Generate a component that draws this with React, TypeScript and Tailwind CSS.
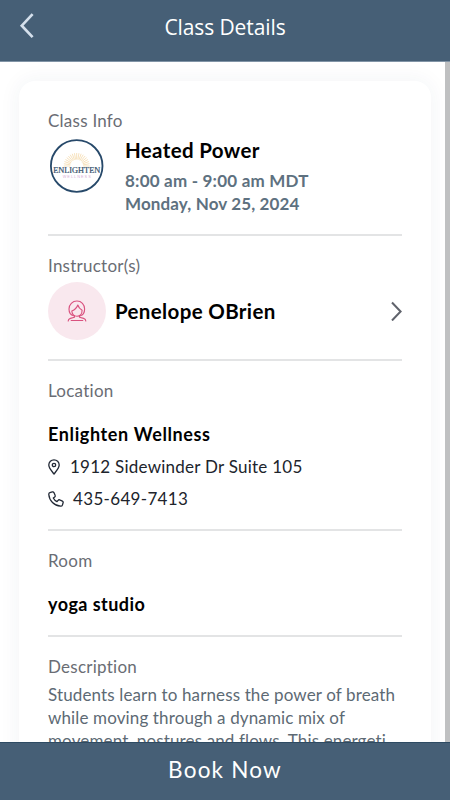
import type { ReactNode } from "react";

type SectionProps = {
  title: string;
  className: string;
  children: ReactNode;
};

const Section = ({ title, className, children }: SectionProps) => (
  <section className={`border-[#e3e4e5] ${className}`}>
    <h2 className="text-[17px] leading-5 tracking-[0.25px] text-[#6a6d74]">
      <span>{title}</span>
    </h2>
    {children}
  </section>
);

const rays = Array.from({ length: 19 }, (_, i) => (Math.PI * i) / 18);

const StudioLogo = () => (
  <svg width="57" height="56" viewBox="0 0 57 56" className="shrink-0">
    <circle cx="28.7" cy="28" r="25.8" fill="#fff" stroke="#27496a" strokeWidth="1.8" />
    {rays.map((angle, i) => (
      <line
        key={i}
        x1={28.7 - 6.5 * Math.cos(angle)}
        y1={28 - 6.5 * Math.sin(angle)}
        x2={28.7 - 13 * Math.cos(angle)}
        y2={28 - 13 * Math.sin(angle)}
        stroke="#f6dfb6"
        strokeWidth="0.9"
      />
    ))}
    <text
      x="28.7"
      y="34.5"
      textAnchor="middle"
      textLength="47"
      lengthAdjust="spacingAndGlyphs"
      fontSize="7.8"
      fill="#35506b"
      stroke="#35506b"
      strokeWidth="0.2"
      fontFamily="'Liberation Serif', serif"
    >
      ENLIGHTEN
    </text>
    <text
      x="28.7"
      y="39.8"
      textAnchor="middle"
      textLength="28"
      fontSize="3.8"
      fill="#d6aed6"
      fontFamily="'Liberation Sans', sans-serif"
    >
      WELLNESS
    </text>
  </svg>
);

const InstructorIcon = () => (
  <svg
    width="20"
    height="22"
    viewBox="0 0 20 22"
    fill="none"
    stroke="#d9527f"
    strokeWidth="1.15"
    strokeLinecap="round"
    strokeLinejoin="round"
  >
    <path d="M6.8 15.8C3.9 15.2 2 12.400 2 9A7.900 7.900 0 0 1 10 1c4.400 0 7.600 3.500 7.600 8 0 3.400-1.600 6.200-4.400 6.800" />
    <path d="M4.800 11C7.800 9.800 9.900 7.700 10.800 5c.7 2.300 2.100 4 4.300 5.200 0 3.500-2.200 6-5.100 6-2.800 0-4.900-2.200-5.200-5.200Z" />
    <path d="M7.500 16v1.300L3.400 18.400C1.900 18.800 1.200 19.700 1.200 21M12.500 16v1.300l4.100 1.100c1.500.4 2.200 1.300 2.200 2.600M4.200 20.500h11.600" />
  </svg>
);

const PinIcon = () => (
  <svg
    width="12"
    height="16"
    viewBox="0 0 12 16"
    fill="none"
    stroke="#222936"
    strokeWidth="1.3"
    strokeLinejoin="round"
  >
    <path d="M6 15C4.200 12.600.8 9.200.8 6a5.200 5.200 0 0 1 10.400 0c0 3.200-3.400 6.600-5.200 9Z" />
    <circle cx="6" cy="6" r="1.700" />
  </svg>
);

const PhoneIcon = () => (
  <svg
    width="16"
    height="16"
    viewBox="0 0 16 16"
    fill="none"
    stroke="#222936"
    strokeWidth="1.3"
    strokeLinejoin="round"
  >
    <path d="M4.300.9 1.900 1.600C1 1.900.7 2.600.8 3.500 1.300 9.800 6.200 14.700 12.500 15.200c.9.1 1.600-.2 1.900-1.100l.7-2.400c.2-.7-.1-1.300-.7-1.600l-2.700-1.200c-.6-.3-1.200-.1-1.600.4L9 10.700C7.400 9.900 6.100 8.600 5.300 7l1.400-1.100c.5-.4.7-1 .4-1.600L5.900 1.600C5.600 1 5 .7 4.300.9Z" />
  </svg>
);

const App = () => {
  return (
    <div className="flex h-[800px] w-[450px] flex-col overflow-hidden bg-white font-['Lato','Open_Sans',sans-serif]">
      {/* Header */}
      <header className="grid h-[62px] shrink-0 grid-cols-[1fr_auto_1fr] items-start border-b border-[#8194a6] bg-[#465f76] text-white">
        <button aria-label="Back" className="ml-[19px] mt-[13px] w-4">
          <svg width="16" height="26" viewBox="0 0 16 26" fill="none" stroke="#d5e0ec" strokeWidth="2.7">
            <path d="M13.600 1.200 2.800 12.700l10.800 11.500" />
          </svg>
        </button>
        <h1 className="mt-3 font-['Open_Sans','Noto_Sans',sans-serif] text-[21px] leading-[30px] tracking-[-0.1px]">
          <span>Class Details</span>
        </h1>
      </header>

      {/* Scrolling content */}
      <main className="flex min-h-0 flex-1 overflow-hidden">
        <div className="min-w-0 flex-1 pl-[19px] pr-[14px] pt-[19px]">
          <div className="h-[760px] rounded-2xl bg-white px-[29px] shadow-[0_0_20px_2px_rgba(40,50,90,0.05)]">
            <Section title="Class Info" className="h-[155px] border-b-2 pt-[30px]">
              <div className="flex">
                <div className="mt-[7px]">
                  <StudioLogo />
                </div>
                <div className="ml-[20px] pt-[6px]">
                  <p className="text-[20.5px] font-bold leading-[26px] tracking-[0.35px] text-black">
                    <span>Heated Power</span>
                  </p>
                  <p className="mt-[6px] text-[17px] font-bold leading-[23px] text-[#5e7180]">
                    <span className="tracking-[0.2px]">8:00 am - 9:00 am MDT</span>
                    <br />
                    <span className="tracking-[0.13px]">Monday, Nov 25, 2024</span>
                  </p>
                </div>
              </div>
            </Section>

            <Section title="Instructor(s)" className="h-[125px] border-b-2 pt-[20px]">
              <div className="mt-[6px] flex items-center">
                <div className="flex size-[58px] items-center justify-center rounded-full bg-[#f9e8ee]">
                  <InstructorIcon />
                </div>
                <p className="ml-[9px] flex-1 text-[20.5px] font-bold leading-[26px] tracking-[0.35px] text-black">
                  <span>Penelope OBrien</span>
                </p>
                <svg width="12" height="20" viewBox="0 0 12 20" fill="none" stroke="#60636c" strokeWidth="2">
                  <path d="m2 1.500 8.600 9L2 19.500" />
                </svg>
              </div>
            </Section>

            <Section title="Location" className="h-[170px] border-b-2 pt-[20px]">
              <p className="mt-[21px] text-[18px] font-bold leading-6 tracking-[0.62px] text-black">
                <span>Enlighten Wellness</span>
              </p>
              <div className="mt-[9px] flex h-6 items-center gap-[10px] text-[17px] tracking-[0.25px] text-[#20242c]">
                <PinIcon />
                <span>1912 Sidewinder Dr Suite 105</span>
              </div>
              <div className="mt-[8px] flex h-6 items-center gap-[9px] text-[17px] tracking-[0.33px] text-[#20242c]">
                <PhoneIcon />
                <span>435-649-7413</span>
              </div>
            </Section>

            <Section title="Room" className="h-[106px] border-b-2 pt-[20px]">
              <p className="mt-[21px] text-[18px] font-bold leading-6 tracking-[0.45px] text-black">
                <span>yoga studio</span>
              </p>
            </Section>

            <Section title="Description" className="pt-[20px]">
              <p className="mt-[6px] whitespace-nowrap text-[17px] leading-[23px] tracking-[0.13px] text-[#5d6a74]">
                <span>Students learn to harness the power of breath</span>
                <br />
                <span>while moving through a dynamic mix of</span>
                <br />
                <span>movement, postures and flows. This energeti</span>
              </p>
            </Section>
          </div>
        </div>
        <div className="w-[5px] shrink-0 bg-[#bfc0c1]" />
      </main>

      {/* Booking bar */}
      <button className="h-[58px] shrink-0 border-t border-[#2e4b63] bg-[#465f76] pb-[3px] text-[22.5px] tracking-[1.2px] text-white">
        <span>Book Now</span>
      </button>
    </div>
  );
};

export default App;
